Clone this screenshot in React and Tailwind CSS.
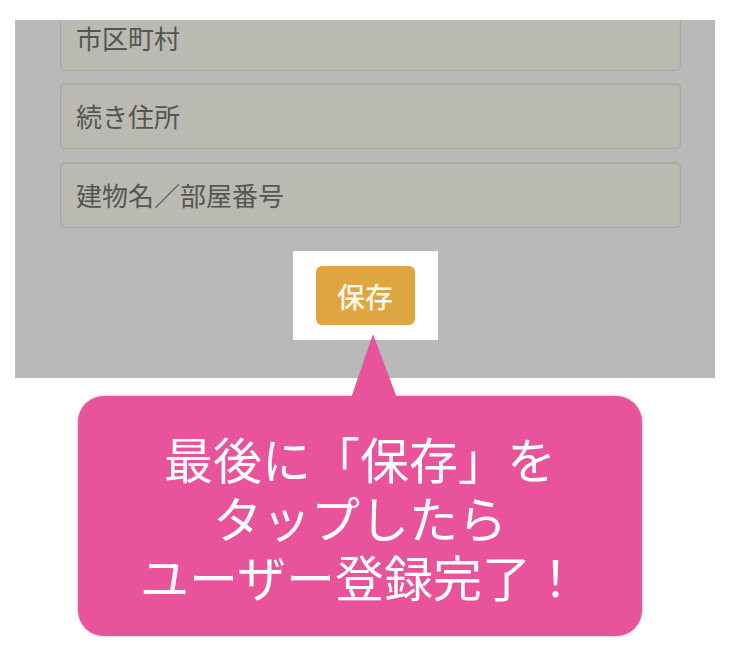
import React from 'react';

const fields = ['市区町村', '続き住所', '建物名／部屋番号'];
const lines = ['最後に「保存」を', 'タップしたら', 'ユーザー登録完了！'];

const Field = ({ label, className }) => (
  <div
    className={`h-[66px] flex items-center pl-[15px] rounded-[5px] border border-[#a8a8a4] bg-[#babab2] shadow-[inset_0_1px_2px_rgba(0,0,0,0.08)] ${className}`}
  >
    <span className="text-[26px] text-[#555552] leading-none">{label}</span>
  </div>
);

const App = () => {
  return (
    <div
      className="w-[730px] h-[656px] bg-white overflow-hidden"
      style={{ fontFamily: '"Noto Sans CJK JP", "Noto Sans", sans-serif' }}
    >
      {/* dimmed form */}
      <div className="mt-[20px] ml-[15px] w-[700px] h-[358px] bg-[#b9b9b9] overflow-hidden">
        <div className="pl-[45px] pr-[34px] -mt-[15px]">
          <Field label={fields[0]} />
          <Field label={fields[1]} className="mt-[12px]" />
          <Field label={fields[2]} className="mt-[13px]" />
        </div>

        {/* highlighted save button */}
        <div className="mt-[23px] flex justify-center">
          <div className="bg-white px-[23px] py-[15px]">
            <div className="w-[99px] h-[59px] rounded-[6px] bg-[#dda641] flex items-center justify-center">
              <span className="text-[28px] font-medium text-[#fbf6ec] leading-none">保存</span>
            </div>
          </div>
        </div>
      </div>

      {/* callout */}
      <div className="relative mt-[18px] ml-[78px] w-[564px] h-[240px] rounded-[26px] bg-[#e9539c] shadow-[0_0_3px_rgba(0,0,0,0.3)] flex flex-col items-center justify-center">
        <svg
          className="absolute left-[272px] -top-[62px]"
          width="48"
          height="64"
          viewBox="0 0 48 64"
        >
          <polygon points="23,0 1,64 47,64" fill="#e9539c" />
        </svg>
        <div className="text-white text-center">
          {lines.map((l) => (
            <div key={l} className="h-[59px] flex items-center justify-center">
              <span className="text-[49px] leading-none">{l}</span>
            </div>
          ))}
        </div>
      </div>
    </div>
  );
};

export default App;
